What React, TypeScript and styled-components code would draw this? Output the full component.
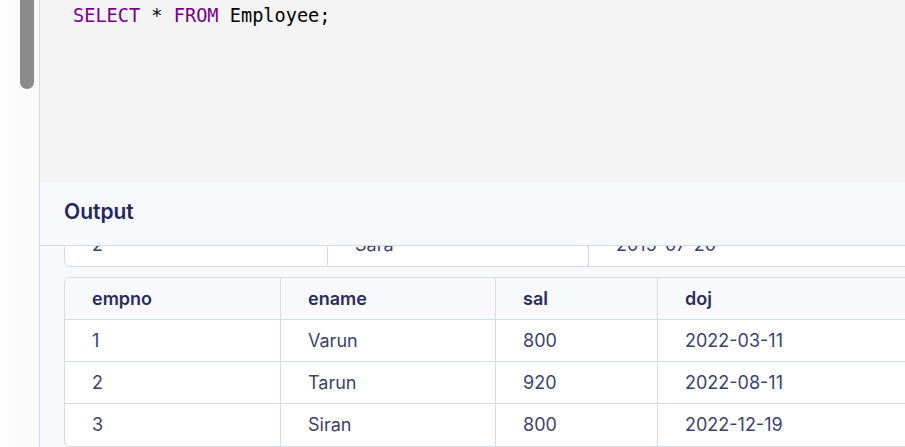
import * as React from 'react'
import styled, { createGlobalStyle } from 'styled-components'

const GlobalStyle = createGlobalStyle`
  html, body {
    margin: 0;
    padding: 0;
    width: 905px;
    height: 447px;
    overflow: hidden;
    background: #fdfdfd;
  }
`

const Page = styled.div`
  display: flex;
  width: 905px;
  height: 447px;
  overflow: hidden;
`

const LeftMargin = styled.div`
  width: 15px;
  flex-shrink: 0;
  background: #fdfdfd;
`

const ScrollGutter = styled.div`
  width: 24px;
  flex-shrink: 0;
  background: #fafafa;
  border-right: 1px solid #d3dbe6;
  display: flex;
  justify-content: center;
`

const ScrollThumb = styled.div`
  width: 14px;
  height: 89px;
  background: #8a8a8a;
  border-radius: 0 0 7px 7px;
`

const Main = styled.div`
  flex: 1;
  display: flex;
  flex-direction: column;
  min-width: 0;
`

const Editor = styled.div`
  height: 182px;
  flex-shrink: 0;
  background: #f4f4f4;
  padding: 3px 0 0 33px;
  box-sizing: border-box;
  font-family: 'DejaVu Sans Mono', monospace;
  font-size: 18.6px;
  line-height: 26px;
  color: #000;
  white-space: pre;
`

const Keyword = styled.span`
  color: #770088;
`

const OutputPanel = styled.div`
  flex: 1;
  display: flex;
  flex-direction: column;
  background: #f8f9fc;
  min-height: 0;
`

const OutputHeader = styled.div`
  height: 64px;
  flex-shrink: 0;
  display: flex;
  align-items: center;
  padding: 0 0 4px 24px;
  box-sizing: border-box;
  border-bottom: 1px solid #d3dbe6;
  font-family: Inter, 'Noto Sans', sans-serif;
  font-size: 21px;
  font-weight: 600;
  color: #25275a;
`

const OutputBody = styled.div`
  flex: 1;
  overflow: hidden;
  padding: 0 0 0 24px;
`

const ScrolledContent = styled.div<{ $offset: number }>`
  margin-top: -${(p) => p.$offset}px;
  display: flex;
  flex-direction: column;
  align-items: flex-start;
  gap: 10px;
`

const Table = styled.table<{ $w: number }>`
  width: ${(p) => p.$w}px;
  flex-shrink: 0;
  border-collapse: separate;
  border-spacing: 0;
  border: 1px solid #d5dce8;
  border-radius: 6px;
  background: #fff;
  table-layout: fixed;
  font-family: Inter, 'Noto Sans', sans-serif;
  font-size: 18px;
  overflow: hidden;
`

const HeadCell = styled.th<{ $w: number }>`
  width: ${(p) => p.$w}px;
  height: 42px;
  padding: 0 0 1px 27px;
  box-sizing: border-box;
  text-align: left;
  font-weight: 600;
  color: #2b2c5c;
  background: #f8f9fd;
  border-bottom: 1px solid #d5dce8;
  border-left: 1px solid #d5dce8;
  &:first-child {
    border-left: none;
  }
`

const Cell = styled.td`
  height: 42px;
  padding: 0 0 1px 27px;
  box-sizing: border-box;
  color: #3d3f6d;
  border-left: 1px solid #d5dce8;
  border-bottom: 1px solid #d5dce8;
  &:first-child {
    border-left: none;
  }
  tr:last-child > & {
    border-bottom: none;
  }
`

type Column = { name: string; w: number }

const previousColumns: Column[] = [
  { name: 'empno', w: 262 },
  { name: 'ename', w: 261 },
  { name: 'doj', w: 400 },
]

const previousRows = [
  ['1', 'Raj', '2012-02-11'],
  ['2', 'Sara', '2015-07-20'],
]

const columns: Column[] = [
  { name: 'empno', w: 215 },
  { name: 'ename', w: 215 },
  { name: 'sal', w: 162 },
  { name: 'doj', w: 320 },
]

const rows = [
  ['1', 'Varun', '800', '2022-03-11'],
  ['2', 'Tarun', '920', '2022-08-11'],
  ['3', 'Siran', '800', '2022-12-19'],
]

const ResultTable = ({ cols, data }: { cols: Column[]; data: string[][] }) => (
  <Table $w={cols.reduce((sum, c) => sum + c.w, 0)}>
    <thead>
      <tr>
        {cols.map((c) => (
          <HeadCell key={c.name} $w={c.w}>
            {c.name}
          </HeadCell>
        ))}
      </tr>
    </thead>
    <tbody>
      {data.map((r, i) => (
        <tr key={i}>
          {r.map((v, j) => (
            <Cell key={j}>{v}</Cell>
          ))}
        </tr>
      ))}
    </tbody>
  </Table>
)

export default function App() {
  return (
    <>
      <GlobalStyle />
      <Page>
        <LeftMargin />
        <ScrollGutter>
          <ScrollThumb />
        </ScrollGutter>
        <Main>
          <Editor>
            <Keyword>SELECT</Keyword> * <Keyword>FROM</Keyword> Employee;
          </Editor>
          <OutputPanel>
            <OutputHeader>Output</OutputHeader>
            <OutputBody>
              <ScrolledContent $offset={107}>
                <ResultTable cols={previousColumns} data={previousRows} />
                <ResultTable cols={columns} data={rows} />
              </ScrolledContent>
            </OutputBody>
          </OutputPanel>
        </Main>
      </Page>
    </>
  )
}
